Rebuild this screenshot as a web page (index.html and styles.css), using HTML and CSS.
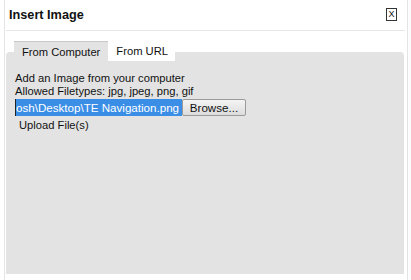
FILE: index.html
```html
<!DOCTYPE html>
<html lang="en">
<head>
    <meta charset="UTF-8">
    <meta name="viewport" content="width=device-width, initial-scale=1.0">
    <title>Insert Image</title>
    <link rel="stylesheet" href="styles.css">
</head>
<body>

<div class="dialog">
    <div class="dialog-header">
        <h1>Insert Image</h1>
        <span class="close-btn">X</span>
    </div>

    <div class="tabs">
        <div class="tab-list">
            <div class="tab active">From Computer</div>
            <div class="tab">From URL</div>
        </div>
        <div class="tab-panel">
            <p>Add an Image from your computer</p>
            <p>Allowed Filetypes: jpg, jpeg, png, gif</p>
            <div class="file-input">
                <span class="file-path">osh\Desktop\TE Navigation.png</span>
                <span class="browse-btn">Browse...</span>
            </div>
            <p class="upload">Upload File(s)</p>
        </div>
    </div>
</div>

</body>
</html>
```

FILE: styles.css
```css
body {
    font-family: 'Liberation Sans', Arial, sans-serif;
    background-color: #fff;
    margin: 0;
    padding: 0;
    font-size: 11.2px;
    color: #111;
}

.dialog {
    margin-left: 4px;
    width: 402px;
    height: 280px;
    border-left: 1px solid #e4e4e4;
    border-right: 1px solid #e4e4e4;
    background-color: #fff;
}

.dialog-header {
    display: flex;
    justify-content: space-between;
    align-items: flex-start;
    margin: 0 2px 0 1px;
    padding: 7px 8px 0 3px;
    height: 23px;
    border-bottom: 1px solid #e6e6e6;
}

.dialog-header h1 {
    margin: 0;
    font-size: 12.7px;
    line-height: 16px;
    font-weight: bold;
    color: #111;
}

.close-btn {
    display: flex;
    align-items: center;
    justify-content: center;
    width: 9px;
    height: 11px;
    margin-top: 1px;
    border: 1px solid #333;
    font-size: 9px;
    line-height: 11px;
}

.tabs {
    padding: 10px 3px 0 1px;
}

.tab-list {
    display: flex;
    padding-left: 8px;
    margin-bottom: -9px;
    position: relative;
    z-index: 1;
}

.tab {
    height: 20px;
    line-height: 20px;
    padding: 0 7px 0 8px;
    background-color: #fff;
}

.tab.active {
    background-color: #e3e3e3;
    border-top: 1px solid #c8c8c8;
    height: 19px;
    padding: 0 8px 0 8px;
}

.tab-panel {
    background-color: #e3e3e3;
    border-radius: 4px 4px 0 0;
    height: 202px;
    padding: 20px 9px 0 9px;
}

.tab-panel p {
    margin: 0;
    line-height: 13px;
}

.file-input {
    display: flex;
    margin-top: 1px;
    height: 17px;
}

.file-path {
    background-color: #3a8ee6;
    color: #fff;
    border-left: 1px solid #222;
    line-height: 17px;
    width: 166px;
    overflow: hidden;
    white-space: nowrap;
    font-size: 11.6px;
}

.browse-btn {
    width: 62px;
    border: 1px solid #9a9a9a;
    border-radius: 2px;
    background: linear-gradient(#f4f4f4, #dcdcdc);
    line-height: 15px;
    text-align: center;
    font-size: 11.6px;
}

.tab-panel .upload {
    margin-top: 3px;
    padding-left: 4px;
}
```
